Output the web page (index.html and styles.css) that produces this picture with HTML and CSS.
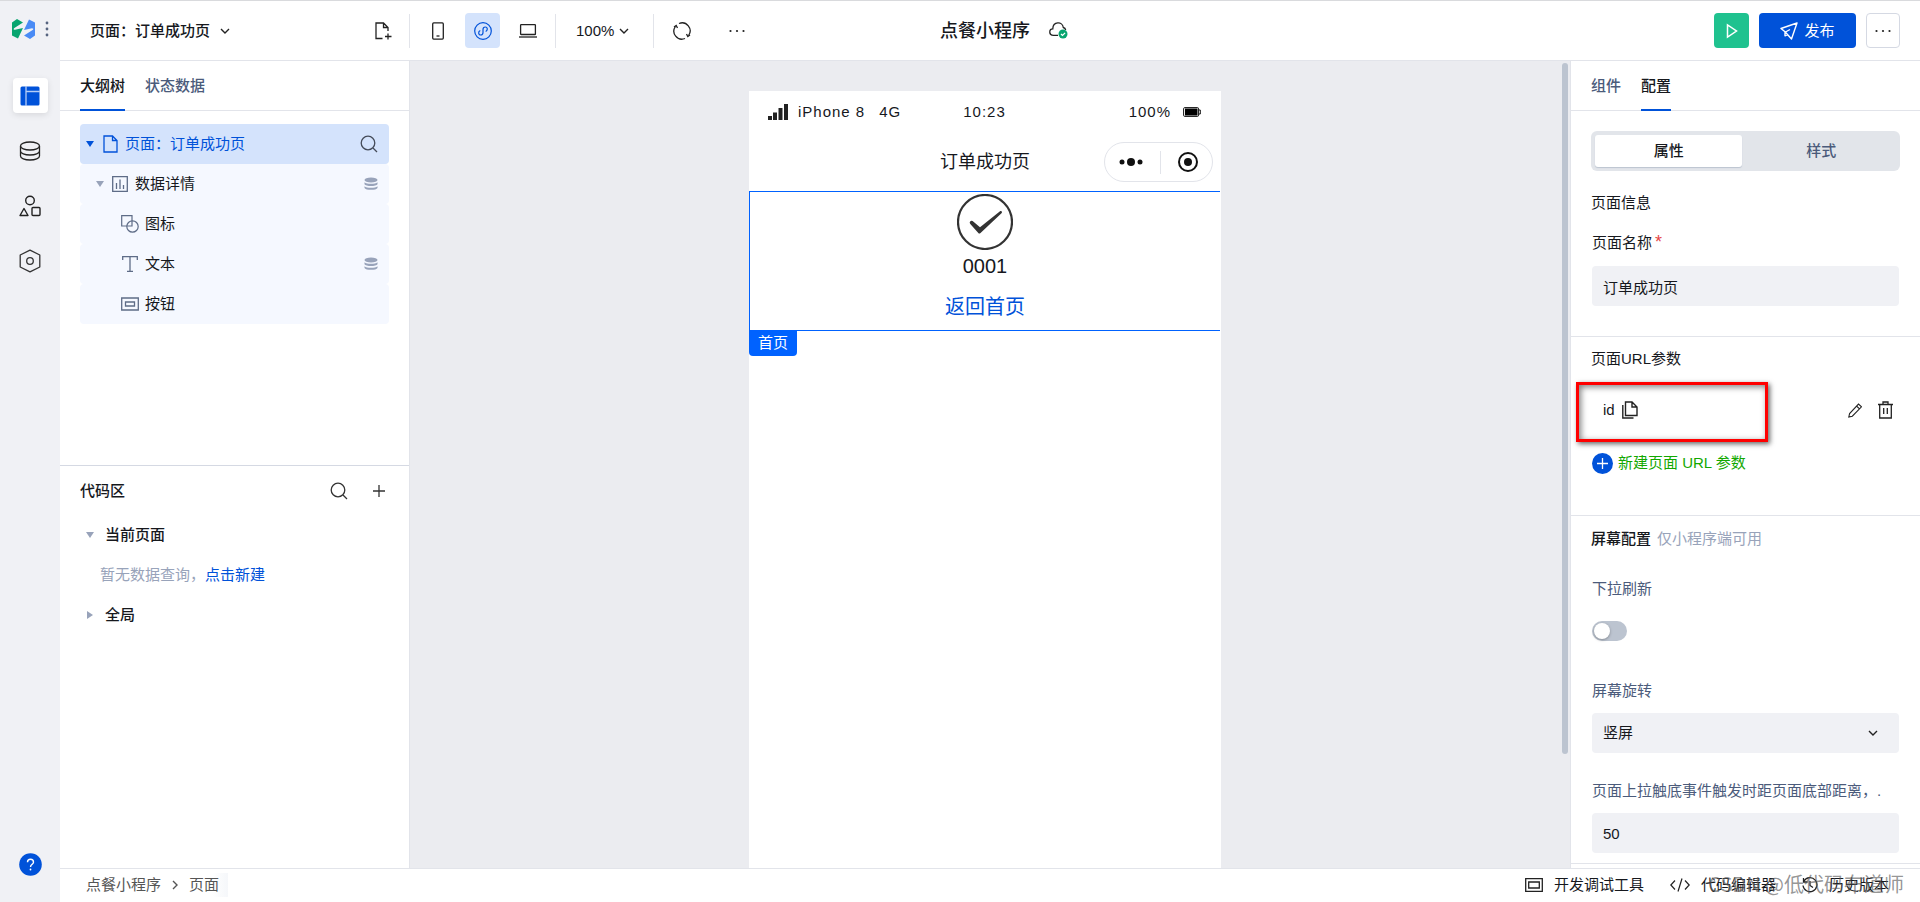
FILE: index.html
```html
<!DOCTYPE html>
<html lang="zh-CN">
<head>
<meta charset="utf-8">
<title>点餐小程序</title>
<link rel="stylesheet" href="styles.css">
</head>
<body>
<div class="app">
  <nav class="rail" aria-label="主导航">
    <div class="brand">
      <svg width="23" height="20" viewBox="0 0 23 20"><path d="M0 3.500 5 0l6 3.500L2 9.300Q1 10.800 3 10.800L11 9 6 19.500 0 16.500z" fill="#07a56f"/><path d="M23 16.500 18 20l-6-3.500 9-5.800Q22 9.200 20 9.200L12 11 17 .5l6 3z" fill="#4a8bf5"/></svg>
      <svg width="4" height="18" viewBox="0 0 4 18" fill="#56647f"><circle cx="2" cy="3" r="1.4"/><circle cx="2" cy="9" r="1.4"/><circle cx="2" cy="15" r="1.4"/></svg>
    </div>
    <button class="rail-btn active" aria-label="页面设计"><svg width="20" height="20" viewBox="0 0 20 20"><rect x=".5" y=".5" width="19" height="19" rx="1.5" fill="#0052d9"/><path d="M6 0v20M6 5.500h14" stroke="#b5cdf6" stroke-width="1.300" fill="none"/></svg></button>
    <button class="rail-btn" aria-label="数据源"><svg width="22" height="20" viewBox="0 0 22 20" fill="none" stroke="#222" stroke-width="1.300"><ellipse cx="11" cy="5" rx="9.500" ry="4"/><path d="M1.500 5v10c0 2.200 4.200 4 9.500 4s9.500-1.800 9.500-4V5M1.500 10c0 2.200 4.200 4 9.500 4s9.500-1.800 9.500-4"/></svg></button>
    <button class="rail-btn" aria-label="组件"><svg width="22" height="22" viewBox="0 0 22 22" fill="none" stroke="#222" stroke-width="1.400"><circle cx="11" cy="5.500" r="4.300"/><path d="M5 13.500 9 20.500H1z" stroke-linejoin="round"/><rect x="13" y="12.500" width="8" height="8" rx="1"/></svg></button>
    <button class="rail-btn" aria-label="设置"><svg width="22" height="24" viewBox="0 0 22 24" fill="none" stroke="#333" stroke-width="1.300" stroke-linejoin="round"><path d="M11 1.200 20.800 6v12L11 22.800 1.200 18V6z"/><circle cx="11" cy="12" r="3.300"/></svg></button>
    <button class="help" aria-label="帮助"><svg width="23" height="23" viewBox="0 0 23 23"><circle cx="11.500" cy="11.500" r="11.300" fill="#0052d9"/><path d="M8.500 9.200c0-4 6-4 6 0 0 2-3 2.300-3 4.800" fill="none" stroke="#fff" stroke-width="1.400"/><circle cx="11.500" cy="16.500" r=".9" fill="#fff"/></svg></button>
  </nav>

  <div class="main">
    <header class="header">
      <div class="tools">
        <button class="page-switch">页面：订单成功页<svg class="chev" width="10" height="6" viewBox="0 0 10 6"><path d="M1 1l4 4 4-4"/></svg></button>
        <button class="icon-btn new-page" aria-label="新建页面"><svg width="17" height="18" viewBox="0 0 17 18" fill="none" stroke="#222" stroke-width="1.300"><path d="M7.500 16.500H1V1h7.500L13 5.500V9M8.500 1v4.500H13M13 11.500v6M10 14.500h6.500"/></svg></button>
        <span class="rule"></span>
        <button class="icon-btn" aria-label="手机"><svg width="12" height="18" viewBox="0 0 12 18" fill="none" stroke="#222" stroke-width="1.300"><rect x=".7" y=".9" width="10.600" height="16.200" rx="1"/><path d="M4.500 14h3"/></svg></button>
        <button class="icon-btn on" aria-label="小程序"><svg width="18" height="18" viewBox="0 0 18 18" fill="none" stroke="#0052d9" stroke-width="1.200"><circle cx="9" cy="9" r="8.300"/><path d="M5.900 8.800C4 9.900 4.400 13 6.700 13 8.300 13 9 12 9 10.500v-3C9 6 9.700 5 11.300 5c2.300 0 2.700 3.100.8 4.200" stroke-linecap="round"/></svg></button>
        <button class="icon-btn" aria-label="电脑"><svg width="18" height="14" viewBox="0 0 18 14" fill="none" stroke="#222" stroke-width="1.300"><rect x="1.600" y=".7" width="14.800" height="9.800" rx=".6"/><path d="M0 13h18"/></svg></button>
        <span class="rule"></span>
        <button class="zoom-btn">100%<svg class="chev" width="10" height="6" viewBox="0 0 10 6"><path d="M1 1l4 4 4-4"/></svg></button>
        <span class="rule"></span>
        <button class="icon-btn" aria-label="刷新"><svg width="18" height="18" viewBox="0 0 18 18" fill="none" stroke="#222" stroke-width="1.300"><path d="M6 1.500A8 8 0 0 1 15.600 13.500M12 16.500A8 8 0 0 1 2.400 4.500M1 5l2.200-1.500L4.500 6M17 13l-2.200 1.500L13.500 12"/></svg></button>
        <button class="icon-btn extra" aria-label="更多"><svg width="18" height="4" viewBox="0 0 18 4" fill="#222"><circle cx="2.500" cy="2" r="1.100"/><circle cx="9" cy="2" r="1.100"/><circle cx="15.500" cy="2" r="1.100"/></svg></button>
      </div>
      <div class="title">
        <h1>点餐小程序</h1>
        <svg width="19" height="17" viewBox="0 0 19 17"><path d="M9 13.300H4.500C-.5 13.300-.2 7 3.800 6.800 4-.8 13.500-.8 14.300 5.500c1.500.4 2.200 1.400 2.400 2.500" fill="none" stroke="#222" stroke-width="1.300"/><circle cx="14" cy="12" r="4.500" fill="#07a56f"/><path d="M12 12l1.500 1.500 2.600-2.700" fill="none" stroke="#fff" stroke-width="1.200"/></svg>
      </div>
      <div class="actions">
        <button class="run" aria-label="预览"><svg width="12" height="16" viewBox="0 0 12 16"><path d="M1.500 2v12L10.500 8z" fill="none" stroke="#fff" stroke-width="1.500"/></svg></button>
        <button class="publish"><svg width="18" height="18" viewBox="0 0 18 18" fill="none" stroke="#fff" stroke-width="1.400" stroke-linejoin="round"><path d="M17 1 1 6.500l4 3.300L11.500 17zM5 9.800v4l3-1.500M5.500 10 10 7.500"/></svg>发布</button>
        <button class="more" aria-label="更多操作"><svg width="18" height="4" viewBox="0 0 18 4" fill="#222"><circle cx="2.500" cy="2" r="1.100"/><circle cx="9" cy="2" r="1.100"/><circle cx="15.500" cy="2" r="1.100"/></svg></button>
      </div>
    </header>

    <div class="workspace">
      <aside class="outline">
        <div class="tabs"><button class="tab current">大纲树</button><button class="tab">状态数据</button></div>
        <div class="tree">
          <div class="node root"><i class="caret"></i><svg width="15" height="18" viewBox="0 0 15 18" fill="none" stroke="#0052d9" stroke-width="1.300"><path d="M1 1h8.500L14 5.500V17H1zM9.500 1v4.500H14"/></svg><span>页面：订单成功页</span><svg class="end" width="18" height="18" viewBox="0 0 18 18" fill="none" stroke="#444b59" stroke-width="1.300"><circle cx="8" cy="8" r="6.800"/><path d="M13 13l4 4"/></svg></div>
          <div class="node l1"><i class="caret"></i><svg width="16" height="16" viewBox="0 0 16 16" fill="none" stroke="#5e6c87" stroke-width="1.300"><path d="M.7.7h14.600v14.600H.7zM4.500 7v6M8 3.500V13M11.500 9v4"/></svg><span>数据详情</span><svg class="end db" width="14" height="14" viewBox="0 0 14 14"><ellipse cx="7" cy="3" rx="6.500" ry="2.500"/><path d="M.5 5.200c2 2 11 2 13 0v2.100c-1 2.400-12 2.400-13 0zM.5 9.200c2 2 11 2 13 0v1.700c-1 2.600-12 2.600-13 0z"/></svg></div>
          <div class="node l2"><svg width="18" height="18" viewBox="0 0 18 18" fill="none" stroke="#5e6c87" stroke-width="1.200"><path d="M6 11H.7V.7H11V6"/><circle cx="11.500" cy="11.500" r="5.700"/><path d="M11 6v5H6"/></svg><span>图标</span></div>
          <div class="node l2"><svg width="18" height="18" viewBox="0 0 18 18" fill="none" stroke="#5e6c87" stroke-width="1.300"><path d="M1.700 5V1.700h14.600V5M9 1.700v14.600M6 16.300h6"/></svg><span>文本</span><svg class="end db" width="14" height="14" viewBox="0 0 14 14"><ellipse cx="7" cy="3" rx="6.500" ry="2.500"/><path d="M.5 5.200c2 2 11 2 13 0v2.100c-1 2.400-12 2.400-13 0zM.5 9.200c2 2 11 2 13 0v1.700c-1 2.600-12 2.600-13 0z"/></svg></div>
          <div class="node l2"><svg width="18" height="14" viewBox="0 0 18 14" fill="none" stroke="#5e6c87" stroke-width="1.300"><path d="M.7 1h16.600v12H.7zM4.500 5h9v4h-9z"/></svg><span>按钮</span></div>
        </div>
        <section class="code">
          <div class="code-head"><h2>代码区</h2>
            <button aria-label="搜索"><svg width="18" height="18" viewBox="0 0 18 18" fill="none" stroke="#333" stroke-width="1.300"><circle cx="8" cy="8" r="6.800"/><path d="M13 13l4 4"/></svg></button>
            <button aria-label="新建"><svg width="12" height="12" viewBox="0 0 12 12" stroke="#333" stroke-width="1.300"><path d="M6 0v12M0 6h12"/></svg></button>
          </div>
          <div class="group"><i class="caret"></i>当前页面</div>
          <p class="empty">暂无数据查询，<a href="#">点击新建</a></p>
          <div class="group"><i class="caret closed"></i>全局</div>
        </section>
      </aside>

      <main class="canvas">
        <div class="phone">
          <div class="status">
            <div class="carrier"><svg width="20" height="16" viewBox="0 0 20 16" fill="#222"><path d="M0 12h4v4H0zM5 8.500h4V16H5zM10.500 4h4v12h-4zM16 0h4v16h-4z"/></svg><span>iPhone 8</span><span class="net">4G</span></div>
            <span>10:23</span>
            <div class="battery"><span>100%</span><svg width="18" height="10" viewBox="0 0 18 10"><rect x=".6" y=".6" width="15" height="8.800" rx="1.200" fill="none" stroke="#111"/><rect x="2" y="1.500" width="12.500" height="7" fill="#000"/><path d="M16 3h1.300v4H16" fill="none" stroke="#111"/></svg></div>
          </div>
          <div class="navbar">
            <span class="nav-title">订单成功页</span>
            <div class="capsule"><svg width="24" height="8" viewBox="0 0 24 8" fill="#111"><circle cx="3" cy="4" r="2.500"/><circle cx="12" cy="4" r="4"/><circle cx="21" cy="4" r="2.500"/></svg><i></i><svg width="20" height="20" viewBox="0 0 20 20"><circle cx="10" cy="10" r="9" fill="none" stroke="#111" stroke-width="2"/><circle cx="10" cy="10" r="4" fill="#111"/></svg></div>
          </div>
          <div class="selected">
            <svg width="56" height="56" viewBox="0 0 56 56"><circle cx="28" cy="28" r="27" fill="none" stroke="#333" stroke-width="2.200"/><path d="M13 27.800c1-1.500 2.500-1 3.500 0l6.500 5.400 20-16c1.500-.8 2.800.8 1.500 2L23.500 39c-.8.8-1.500.8-2.200 0l-8-9c-.6-.8-.8-1.500-.3-2.200z" fill="#333"/></svg>
            <div class="order">0001</div>
            <a class="back" href="#">返回首页</a>
            <span class="badge">首页</span>
          </div>
        </div>
        <i class="scrollbar"></i>
      </main>

      <aside class="config">
        <div class="tabs"><button class="tab">组件</button><button class="tab current">配置</button></div>
        <div class="config-body">
          <section class="block first">
            <div class="segment"><button class="seg on">属性</button><button class="seg">样式</button></div>
            <h3>页面信息</h3>
            <label class="label name-label" for="pname">页面名称<b>*</b></label>
            <input class="field" id="pname" type="text" value="订单成功页">
          </section>
          <section class="block params">
            <h3>页面URL参数</h3>
            <div class="param">
              <span>id</span>
              <button aria-label="复制"><svg width="16" height="18" viewBox="0 0 16 18" fill="none" stroke="#222" stroke-width="1.400"><path d="M3.500 1H10l5 5v8.500H3.500zM10 1v5h5M.8 4v13h10.700"/></svg></button>
              <button class="edit" aria-label="编辑"><svg width="14" height="15" viewBox="0 0 14 15" fill="none" stroke="#222" stroke-width="1.100"><path d="M.8 14l.8-3.500L10.500 1l3 2.800-9.200 9.400zM8.500 3l3 2.800"/></svg></button>
              <button aria-label="删除"><svg width="15" height="18" viewBox="0 0 15 18" fill="none" stroke="#222" stroke-width="1.300"><path d="M0 3.500h15M5 3V1h5v2M1.700 3.500V17h11.600V3.500M5.700 7v6M9.300 7v6"/></svg></button>
              <i class="mark"></i>
            </div>
            <button class="add"><svg width="21" height="21" viewBox="0 0 21 21"><circle cx="10.500" cy="10.500" r="10.500" fill="#0052d9"/><path d="M10.500 5v11M5 10.500h11" stroke="#fff" stroke-width="1.300"/></svg>新建页面 URL 参数</button>
          </section>
          <section class="block screen">
            <h3 class="strong">屏幕配置<small>仅小程序端可用</small></h3>
            <label class="label muted pull" for="pull">下拉刷新</label>
            <input class="toggle" id="pull" type="checkbox" role="switch">
            <label class="label muted rotate" for="rot">屏幕旋转</label>
            <div class="select-wrap"><select class="field" id="rot"><option>竖屏</option></select><svg class="chev" width="10" height="6" viewBox="0 0 10 6"><path d="M1 1l4 4 4-4"/></svg></div>
            <label class="label muted reach" for="dist">页面上拉触底事件触发时距页面底部距离，.</label>
            <input class="field" id="dist" type="text" value="50">
          </section>
        </div>
      </aside>
    </div>

    <footer class="footer">
      <div class="crumbs"><span>点餐小程序</span><svg class="chev" width="6" height="10" viewBox="0 0 6 10"><path d="M1 1l4 4-4 4"/></svg><span class="here">页面</span></div>
      <div class="foot-tools">
        <button><svg width="18" height="14" viewBox="0 0 18 14" fill="none" stroke="#222" stroke-width="1.300"><path d="M.7.7h16.600v12.600H.7zM3.700 4h10.600v6H3.700z"/></svg>开发调试工具</button>
        <button class="editor"><svg width="20" height="14" viewBox="0 0 20 14" fill="none" stroke="#222" stroke-width="1.200"><path d="M5 2.500.8 7 5 11.500M15 2.500 19.200 7 15 11.500M12 .5 8 13.500"/></svg>代码编辑器</button>
        <button><svg width="16" height="16" viewBox="0 0 16 16" fill="none" stroke="#222" stroke-width="1.300"><path d="M2 4a7 7 0 1 1-1 4.500M1.500 1v4h4M8 4v4.500l3 2"/></svg>历史版本</button>
      </div>
      <span class="watermark">CSDN @低代码布道师</span>
    </footer>
  </div>
</div>
</body>
</html>
```
FILE: styles.css
```css
* { box-sizing: border-box; }
body {
  margin: 0;
  color: #16181d;
  background: #fff;
  font: 15px/24px "Liberation Sans", "Noto Sans CJK SC", sans-serif;
}
button, input, select { font: inherit; color: inherit; }
button { display: flex; align-items: center; padding: 0; border: 0; background: none; white-space: nowrap; }
svg { display: block; flex: none; }
h1, h2, h3, p { margin: 0; font-size: 15px; font-weight: 400; }
a { color: #0052d9; text-decoration: none; }
.chev { fill: none; stroke: #222; stroke-width: 1.4; }

.app { display: flex; height: 100vh; border-top: 1px solid #d9dadd; overflow: hidden; }
.rail { display: flex; flex-direction: column; align-items: center; gap: 20px; width: 60px; padding: 16px 0 26px; background: #f0f1f5; flex: none; }
.brand { display: flex; align-items: center; gap: 10px; height: 24px; margin: 0 0 17px; }
.rail-btn { justify-content: center; width: 35px; height: 35px; border-radius: 4px; }
.rail-btn.active { background: #fff; box-shadow: 0 2px 6px rgba(0, 0, 0, .1); }
.help { margin-top: auto; }

.main { display: flex; flex-direction: column; flex: 1; min-width: 0; }
.header { display: grid; grid-template-columns: 1fr auto 1fr; align-items: center; height: 60px; padding: 0 20px 0 30px; border-bottom: 1px solid #e2e4ea; flex: none; }
.tools { display: flex; align-items: center; }
.page-switch { gap: 10px; width: 275px; font-weight: 500; }
.icon-btn { justify-content: center; width: 35px; height: 35px; margin: 0 5px; border-radius: 4px; }
.icon-btn.on { background: #d4e3fc; }
.rule { width: 1px; height: 34px; background: #e2e4ea; }
.rule + .icon-btn { margin-left: 10px; }
.icon-btn:has(+ .rule) { margin-right: 10px; }
.icon-btn.new-page { margin: 0 8px 0 1px; }
.icon-btn.extra { margin-left: 15px; }
.zoom-btn { gap: 5px; padding: 0 24px 0 20px; }
.title { display: flex; align-items: center; gap: 19px; margin-left: 18px; }
.title h1 { font-size: 18px; font-weight: 500; }
.actions { display: flex; justify-content: flex-end; gap: 10px; }
.actions button { justify-content: center; height: 35px; border-radius: 4px; }
.run { width: 35px; background: #1fc28f; }
.actions .publish { gap: 6px; width: 97px; background: #0052d9; color: #fff; }
.actions .more { width: 34px; border: 1px solid #d5d9e3; }

.workspace { display: flex; flex: 1; min-height: 0; }
.tabs { display: flex; gap: 20px; height: 50px; padding: 0 20px; border-bottom: 1px solid #e2e4ea; flex: none; }
.tab { height: 50px; padding-top: 2px; border-bottom: 2px solid transparent; color: #4b5b7b; font-weight: 500; }
.tab.current { border-color: #0052d9; color: #16181d; }

.outline { display: flex; flex-direction: column; width: 350px; border-right: 1px solid #e2e4ea; flex: none; }
.tree { padding: 13px 20px; flex: 1; }
.node { display: flex; align-items: center; gap: 7px; height: 40px; padding: 0 11px 0 6px; border-radius: 4px; background: #f5f8ff; }
.node.root { background: #d4e3fc; color: #0052d9; }
.node.l1 { padding-left: 16px; }
.node.l2 { gap: 6px; padding-left: 41px; }
.end { margin-left: auto; }
.db { fill: #98a3ba; }
.caret { width: 8px; height: 6px; margin-right: 1px; background: #98a3ba; clip-path: polygon(0 0, 100% 0, 50% 100%); flex: none; }
.root .caret { margin-right: 2px; background: #0052d9; }
.caret.closed { width: 6px; height: 8px; margin: 0 2px 0 1px; clip-path: polygon(0 0, 100% 50%, 0 100%); }
.code { height: 403px; padding: 5px 20px; border-top: 1px solid #d5d9e3; }
.code-head { display: flex; align-items: center; height: 40px; margin-bottom: 4px; padding-right: 4px; }
.code-head h2 { flex: 1; font-weight: 500; }
.code-head button { margin-left: 25px; }
.group { display: flex; align-items: center; gap: 10px; height: 40px; padding-left: 6px; font-weight: 500; }
.empty { padding-left: 20px; line-height: 40px; color: #98a3ba; }

.canvas { display: flex; justify-content: center; flex: 1; min-width: 0; padding: 30px 10px 0 0; background: #ebecf0; position: relative; }
.phone { width: 472px; background: #fff; }
.scrollbar { position: absolute; right: 2px; top: 2px; width: 6px; height: 691px; border-radius: 3px; background: #bcc4d0; }
.status { display: grid; grid-template-columns: 1fr auto 1fr; align-items: center; height: 42px; padding: 0 20px 0 19px; letter-spacing: 1px; }
.carrier { display: flex; align-items: center; gap: 10px; }
.net { margin-left: 4px; }
.battery { display: flex; align-items: center; justify-content: flex-end; gap: 12px; }
.navbar { display: grid; grid-template-columns: 1fr auto 1fr; align-items: center; height: 58px; padding: 0 8px; }
.nav-title { grid-column: 2; font-size: 18px; }
.capsule { display: flex; align-items: center; justify-content: space-between; justify-self: end; width: 109px; height: 40px; padding: 0 14px; border: 1px solid #e2e4ea; border-radius: 20px; }
.capsule i { width: 1px; height: 23px; background: #e2e4ea; }
.selected { display: flex; flex-direction: column; align-items: center; position: relative; height: 140px; margin-right: 1px; padding-top: 2px; border: 1px solid #0062ff; border-right: 0; font-size: 20px; }
.order { line-height: 32px; }
.back { line-height: 50px; }
.badge { position: absolute; left: -1px; top: 100%; padding: 1px 9px; border-radius: 0 0 4px 4px; background: #0062ff; color: #fff; font-size: 15px; }

.config { display: flex; flex-direction: column; width: 350px; border-left: 1px solid #e2e4ea; flex: none; min-height: 0; }
.config-body { flex: 1; min-height: 0; overflow: hidden; }
.block { display: flex; flex-direction: column; padding: 10px 20px 40px; border-bottom: 1px solid #e2e4ea; }
.block.first { padding: 20px 20px 30px; }
.segment { display: flex; height: 40px; margin-bottom: 20px; padding: 4px; border-radius: 6px; background: #e2e5ea; }
.seg { justify-content: center; flex: 1; padding-left: 4px; border-radius: 3px; color: #4b5b7b; font-weight: 500; }
.seg.on { flex: 0 0 49%; padding: 0; background: #fff; color: #16181d; box-shadow: 0 1px 1px #bcc4d0; }
.strong { font-weight: 500; }
.strong small { margin-left: 6px; color: #98a3ba; font-size: 15px; font-weight: 400; }
.label { margin: 0 1px; white-space: nowrap; }
.name-label { margin-top: 16px; margin-bottom: 11px; }
.label b { margin-left: 3px; color: #e54545; font-size: 18px; font-weight: 400; line-height: 16px; }
.muted { color: #4b5b7b; }
.field { display: block; height: 40px; margin: 0 1px; padding: 0 11px; border: 0; border-radius: 4px; background: #f0f1f5; min-width: 0; }
.param { display: flex; align-items: center; position: relative; height: 40px; margin: 19px 0 21px; padding: 0 7px 0 12px; }
.param button { margin-left: 7px; }
.param .edit { margin-left: auto; margin-right: 9px; }
.mark { position: absolute; left: -15px; top: -8px; width: 192px; height: 60px; border: 3px solid #f00; box-shadow: 2px 2px 5px rgba(0, 0, 0, .6), inset 2px 2px 6px rgba(0, 0, 0, .5); }
.add { gap: 5px; height: 24px; margin-left: 1px; color: #12a800; }
.screen { padding: 11px 20px 10px; }
.pull { margin-top: 26px; margin-bottom: 20px; }
.rotate { margin-top: 38px; margin-bottom: 10px; }
.reach { margin-top: 26px; margin-bottom: 10px; }
.toggle { appearance: none; display: flex; align-items: center; width: 35px; height: 20px; margin: 0 1px; padding: 0 2px; border-radius: 10px; background: #bcc4d0; }
.toggle::before { content: ""; width: 16px; height: 16px; border-radius: 50%; background: #fff; box-shadow: 0 1px 3px rgba(0, 0, 0, .3); }
.select-wrap { position: relative; }
.select-wrap .field { appearance: none; width: calc(100% - 2px); }
.select-wrap .chev { position: absolute; right: 22px; top: 17px; }

.footer { display: flex; align-items: flex-start; justify-content: space-between; position: relative; height: 34px; padding: 4px 31px 0 26px; border-top: 1px solid #e2e4ea; flex: none; }
.crumbs { display: flex; align-items: center; gap: 11px; color: #555; }
.crumbs .chev { stroke: #555; }
.here { padding-right: 9px; background: linear-gradient(90deg, #fff 60%, #f5f7fa); }
.foot-tools { display: flex; gap: 26px; }
.foot-tools button { gap: 11px; }
.watermark { position: absolute; right: 16px; top: 3px; color: rgba(90, 90, 90, .65); font-family: "Noto Sans CJK SC", sans-serif; font-size: 20px; pointer-events: none; }
```
